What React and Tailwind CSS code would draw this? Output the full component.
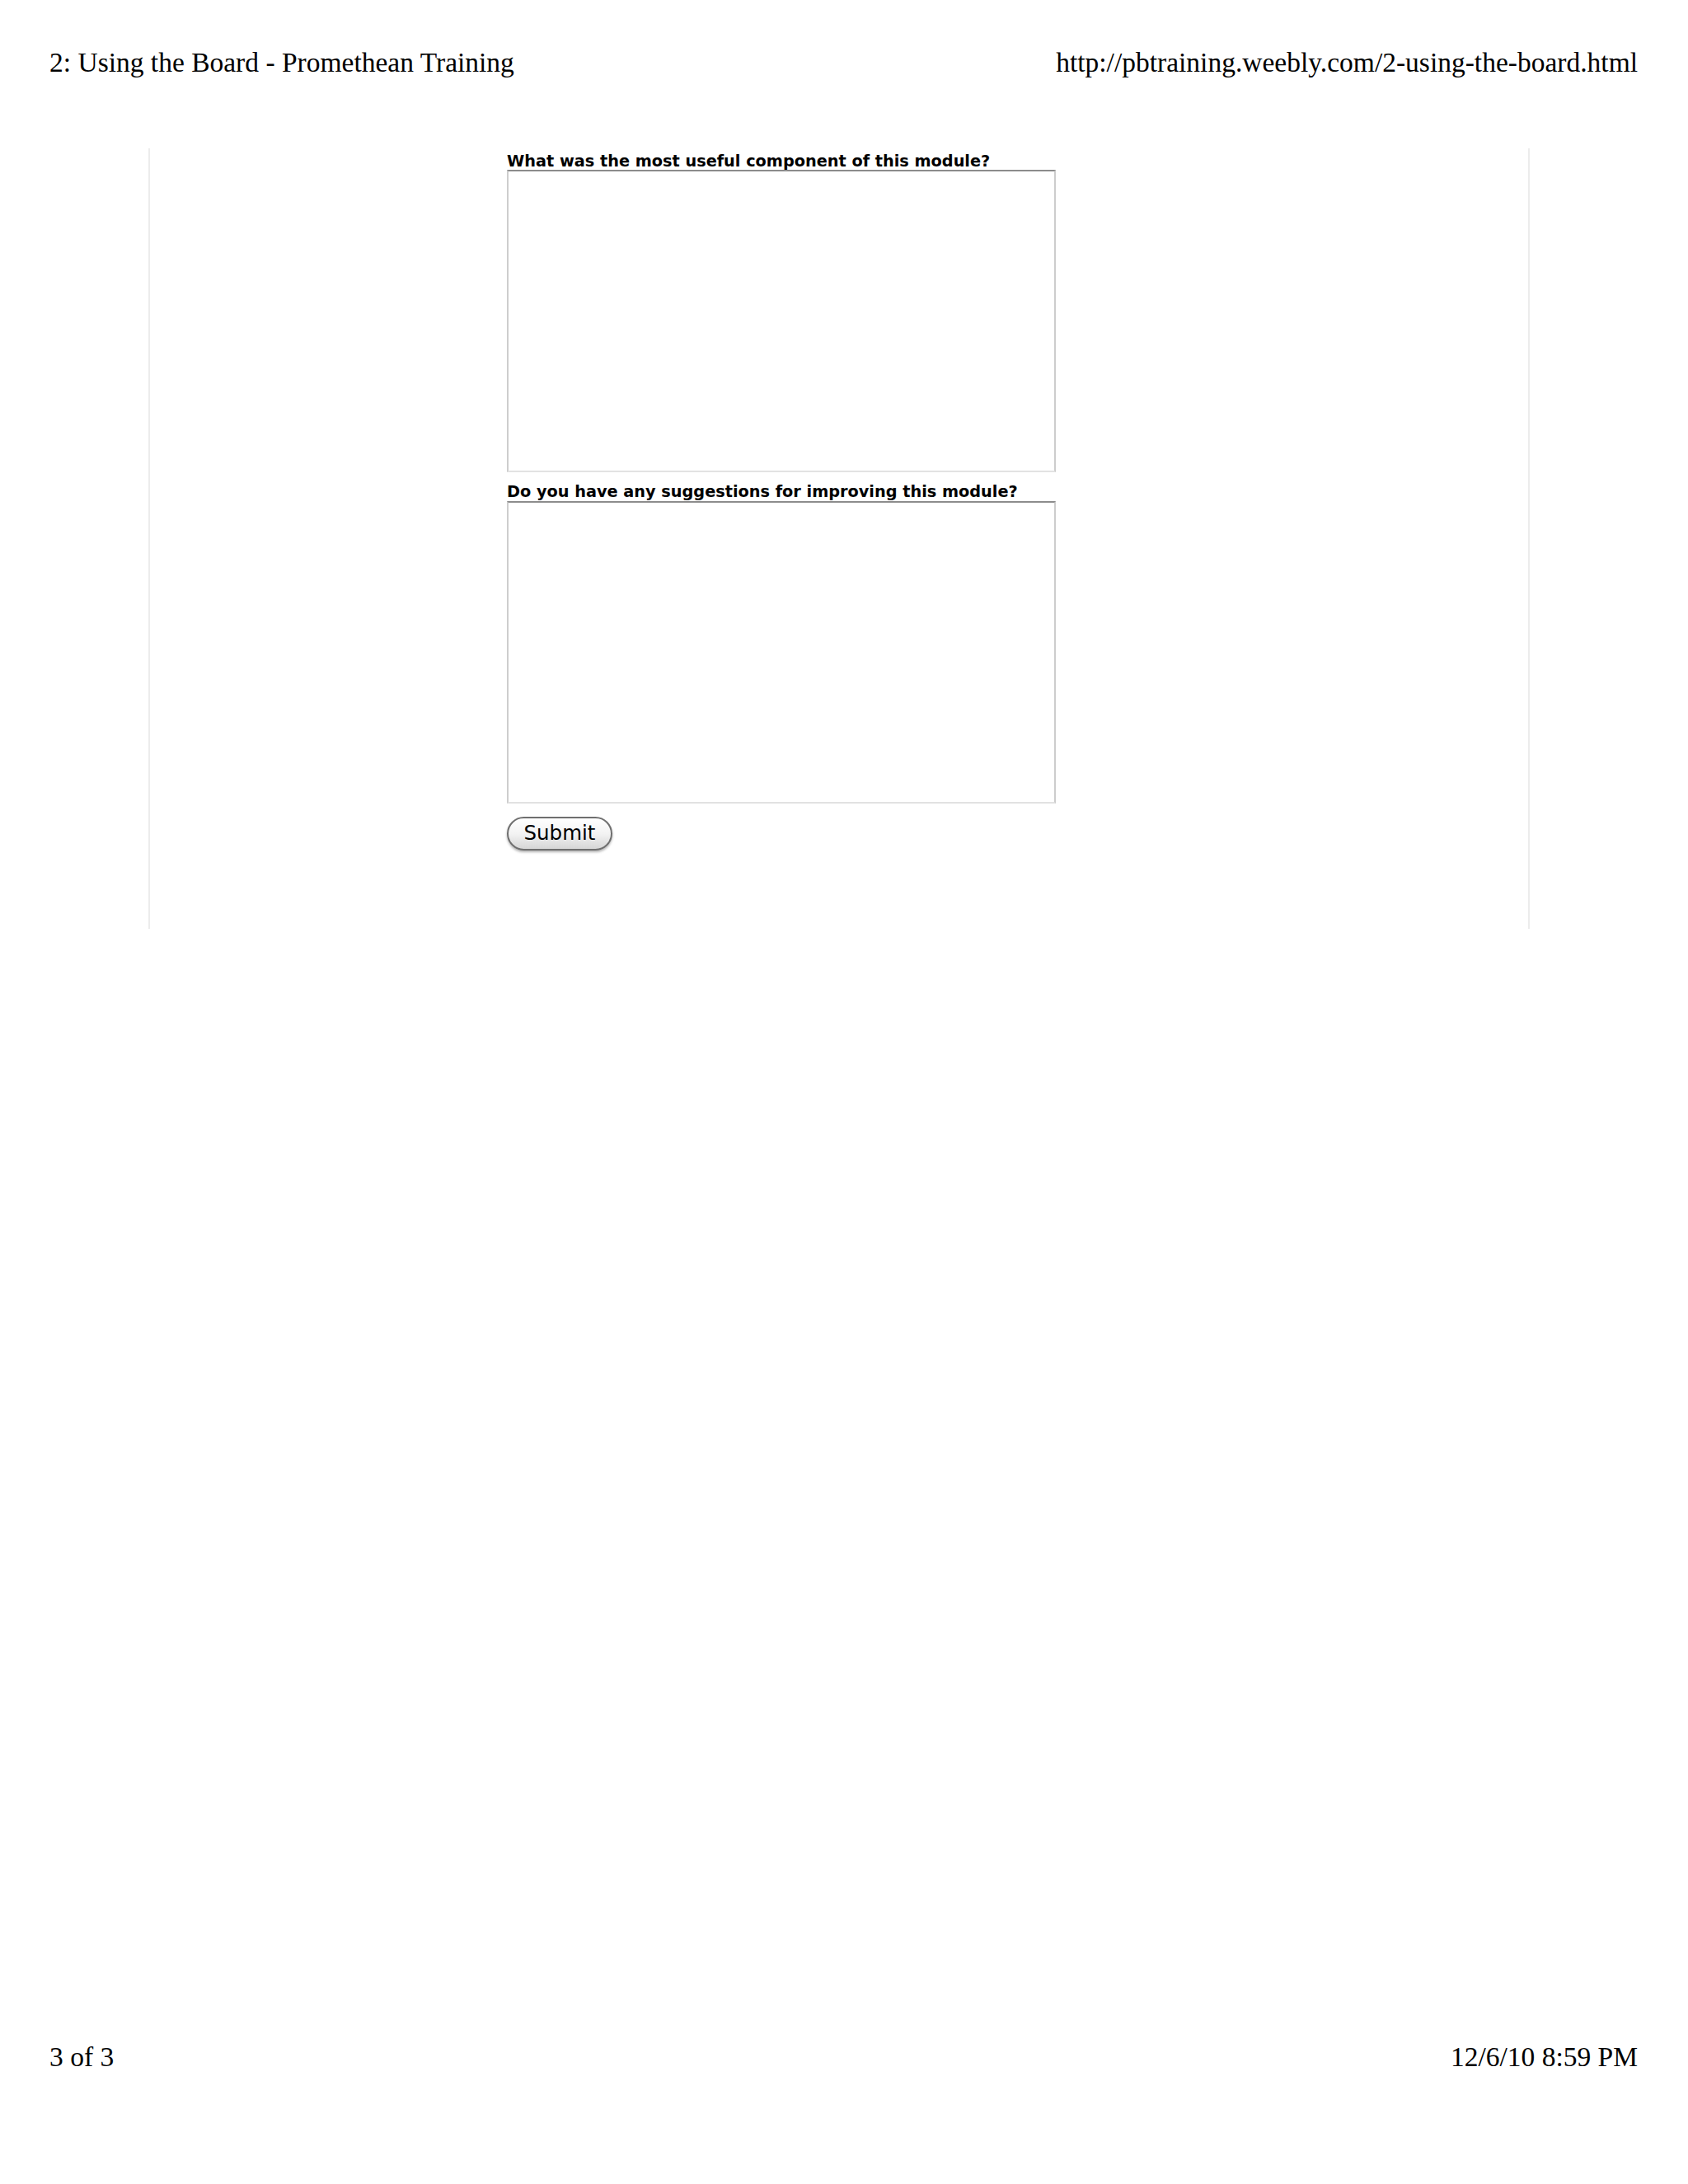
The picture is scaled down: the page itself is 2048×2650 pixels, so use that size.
const serif = { fontFamily: '"Liberation Serif", "Times New Roman", serif' };

const Field = ({ label, first }) => (
  <div className={first ? '' : 'mt-[13px]'}>
    <label className="block text-[19.3px] leading-[21px] font-bold text-black font-['DejaVu_Sans',sans-serif] whitespace-nowrap">
      {label}
    </label>
    <textarea
      className={`block w-[666px] h-[367px] resize-none bg-white outline-none border-x-2 border-x-[#cdcdcd] border-t-2 border-t-[#8c8c8c] border-b-2 border-b-[#e2e2e2] ${first ? '' : 'mt-[1px]'}`}
    />
  </div>
);

export default function App() {
  return (
    <div className="w-[2048px] h-[2650px] bg-white flex flex-col text-black">
      {/* Print header */}
      <div
        className="flex justify-between pl-[60px] pr-[61px] pt-[59px] text-[33.5px] leading-[33px]"
        style={serif}
      >
        <span>2: Using the Board - Promethean Training</span>
        <span>http://pbtraining.weebly.com/2-using-the-board.html</span>
      </div>

      {/* Page body */}
      <div className="mt-[88px] ml-[180px] w-[1676px] h-[947px] border-x-2 border-[#ececec] pl-[433px] pt-[5px]">
        <form onSubmit={(e) => e.preventDefault()}>
          <Field first label="What was the most useful component of this module?" />
          <Field label="Do you have any suggestions for improving this module?" />
          <button
            type="submit"
            className="mt-[16px] w-[128px] h-[41px] rounded-full border-2 border-[#6f6f6f] bg-linear-to-b from-white via-[#f3f3f3] to-[#d6d6d6] shadow-[0_2px_3px_rgba(0,0,0,0.3)] text-[24.5px] leading-none text-black font-['DejaVu_Sans',sans-serif]"
          >
            Submit
          </button>
        </form>
      </div>

      {/* Print footer */}
      <div
        className="mt-auto flex justify-between pl-[60px] pr-[61px] pb-[138px] text-[33.5px] leading-[33px]"
        style={serif}
      >
        <span>3 of 3</span>
        <span>12/6/10 8:59 PM</span>
      </div>
    </div>
  );
}
